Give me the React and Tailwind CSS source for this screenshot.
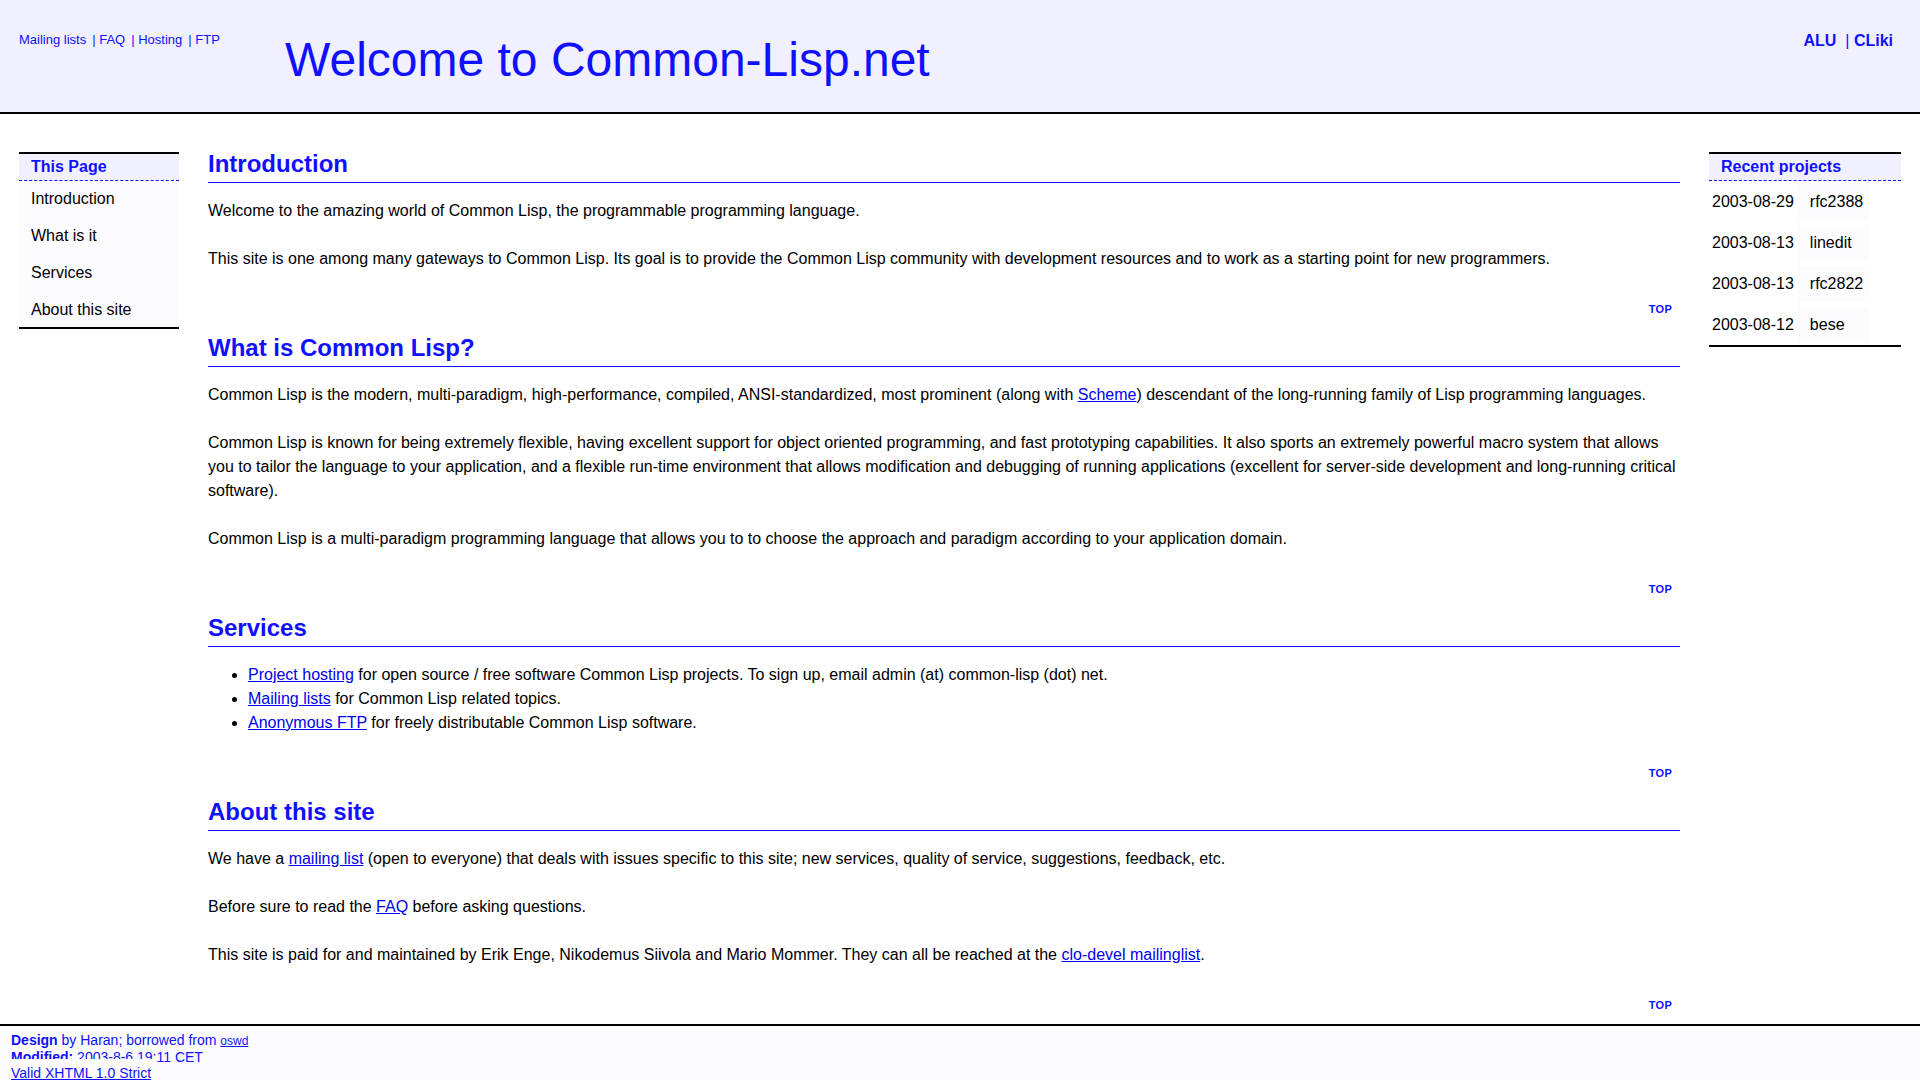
const projects = [
  ["2003-08-29", "rfc2388"],
  ["2003-08-13", "linedit"],
  ["2003-08-13", "rfc2822"],
  ["2003-08-12", "bese"],
];

const pageLinks = [
  ["Introduction", "#introduction"],
  ["What is it", "#what"],
  ["Services", "#services"],
  ["About this site", "#about"],
];

const siteLinks = ["Mailing lists", "FAQ", "Hosting", "FTP"];

function Link({ children }) {
  return (
    <a href="#" className="text-[#0000ee] underline">
      {children}
    </a>
  );
}

function Section({ id, title, children }) {
  return (
    <section id={id}>
      <h2 className="border-b border-[#1010ff] text-2xl leading-9 font-bold text-[#1010ff]">{title}</h2>
      <div className="mt-4 flex flex-col gap-6">{children}</div>
      <div className="mt-[30px] pr-2 text-right text-[11px] leading-4">
        <a href="#top" className="font-bold tracking-wide text-[#1010ff]">TOP</a>
      </div>
    </section>
  );
}

function BoxTitle({ children }) {
  return (
    <h3 className="border-b border-dashed border-[#1010ff] bg-[#f0f0ff] pl-3 leading-[26px] font-bold text-[#1010ff]">
      {children}
    </h3>
  );
}

export default function App() {
  return (
    <div id="top" className="flex min-h-screen flex-col bg-white font-['Liberation_Sans',Arial,sans-serif] text-base leading-6 text-black">
      <header className="flex items-start border-b-2 border-black bg-[#f0f0ff] pr-[27px] pb-6 pl-[19px] text-[#1010ff]">
        <nav className="w-[266px] pt-7 text-[13px]">
          {siteLinks.map((label, i) => (
            <span key={label}>
              {i > 0 && <span className="ml-1.5">| </span>}
              <a href="#">{label}</a>
            </span>
          ))}
        </nav>
        <h1 className="flex-1 pt-8 text-5xl leading-14">Welcome to Common-Lisp.net</h1>
        <nav className="pt-[29px]">
          <a href="#" className="font-bold">ALU</a>
          {"\u00a0 | "}
          <a href="#" className="font-bold">CLiki</a>
        </nav>
      </header>

      <div className="flex flex-1 items-start gap-[29px] px-[19px] pt-8">
        <nav className="mt-1.5 w-40 shrink-0 border-y-2 border-black bg-[#fcfcff]">
          <BoxTitle>This Page</BoxTitle>
          <ul className="flex flex-col gap-[3px] pt-px">
            {pageLinks.map(([label, href]) => (
              <li key={label}>
                <a href={href} className="block py-[5px] pl-3">{label}</a>
              </li>
            ))}
          </ul>
        </nav>

        <main className="flex min-w-0 flex-1 flex-col gap-[13px] pb-[11px]">
          <Section id="introduction" title="Introduction">
            <p>Welcome to the amazing world of Common Lisp, the programmable programming language.</p>
            <p>
              This site is one among many gateways to Common Lisp. Its goal is to provide the Common Lisp community with
              development resources and to work as a starting point for new programmers.
            </p>
          </Section>
          <Section id="what" title="What is Common Lisp?">
            <p>
              Common Lisp is the modern, multi-paradigm, high-performance, compiled, ANSI-standardized, most prominent
              (along with <Link>Scheme</Link>) descendant of the long-running family of Lisp programming languages.
            </p>
            <p>
              Common Lisp is known for being extremely flexible, having excellent support for object oriented
              programming, and fast prototyping capabilities. It also sports an extremely powerful macro system that
              allows you to tailor the language to your application, and a flexible run-time environment that allows
              modification and debugging of running applications (excellent for server-side development and
              long-running critical software).
            </p>
            <p>
              Common Lisp is a multi-paradigm programming language that allows you to to choose the approach and
              paradigm according to your application domain.
            </p>
          </Section>
          <Section id="services" title="Services">
            <ul className="list-disc pl-10">
              <li>
                <Link>Project hosting</Link> for open source / free software Common Lisp projects. To sign up, email
                admin (at) common-lisp (dot) net.
              </li>
              <li>
                <Link>Mailing lists</Link> for Common Lisp related topics.
              </li>
              <li>
                <Link>Anonymous FTP</Link> for freely distributable Common Lisp software.
              </li>
            </ul>
          </Section>
          <Section id="about" title="About this site">
            <p>
              We have a <Link>mailing list</Link> (open to everyone) that deals with issues specific to this site; new
              services, quality of service, suggestions, feedback, etc.
            </p>
            <p>
              Before sure to read the <Link>FAQ</Link> before asking questions.
            </p>
            <p>
              This site is paid for and maintained by Erik Enge, Nikodemus Siivola and Mario Mommer. They can all be
              reached at the <Link>clo-devel mailinglist</Link>.
            </p>
          </Section>
        </main>

        <aside className="mt-1.5 w-48 shrink-0 border-y-2 border-black">
          <BoxTitle>Recent projects</BoxTitle>
          <table className="ml-0.5 border-collapse">
            <tbody>
              {projects.map(([date, name]) => (
                <tr key={name}>
                  <td className="px-px pt-[3px] pb-0.5">{date}</td>
                  <td className="pt-[3px] pb-0.5 pl-[3px]">
                    <a href="#" className="block bg-[#fcfcff] py-1.5 pr-1.5 pl-3">{name}</a>
                  </td>
                </tr>
              ))}
            </tbody>
          </table>
        </aside>
      </div>

      <footer className="border-t-2 border-black bg-[#fcfcff] px-[11px] pt-1.5 text-sm leading-4 text-[#1010ff]">
        <b>Design</b> by Haran; borrowed from <a href="#" className="text-xs leading-4 underline">oswd</a>
        <br />
        <b>Modified:</b> 2003-8-6 19:11 CET
        <br />
        <a href="#" className="bg-[#fcfcff] py-1.5 pr-1.5 underline">Valid XHTML 1.0 Strict</a>
      </footer>
    </div>
  );
}
